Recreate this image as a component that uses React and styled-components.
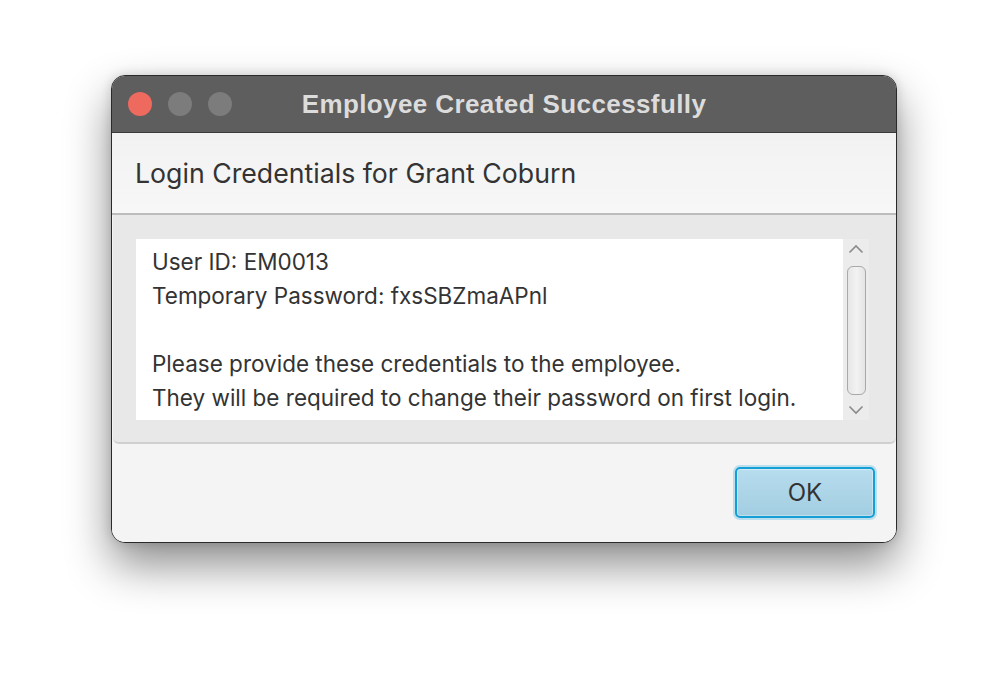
import React from "react";
import styled, { createGlobalStyle } from "styled-components";

const Global = createGlobalStyle`
  html, body { margin: 0; padding: 0; background: #ffffff; }
  body { font-family: "Inter", "Noto Sans", sans-serif; }
`;

const Stage = styled.div`
  width: 1008px;
  height: 690px;
  box-sizing: border-box;
  padding: 75px 0 0 111px;
  background: #ffffff;
`;

const Window = styled.div`
  width: 786px;
  height: 468px;
  box-sizing: border-box;
  border: 1px solid #2a2a2a;
  border-radius: 14px;
  overflow: hidden;
  display: flex;
  flex-direction: column;
  background: #f4f4f4;
  box-shadow: 0 22px 45px rgba(0, 0, 0, 0.45), 0 0 12px rgba(0, 0, 0, 0.15);
`;

const TitleBar = styled.div`
  height: 56px;
  flex: none;
  background: #5e5e5e;
  border-bottom: 1px solid #3a3a3a;
  display: flex;
  align-items: center;
  position: relative;
  padding-left: 16px;
`;

const Lights = styled.div`
  display: flex;
  gap: 16px;
  position: relative;
  z-index: 1;
`;

const Light = styled.span`
  width: 24px;
  height: 24px;
  border-radius: 50%;
  background: ${(p) => p.$color};
`;

const Title = styled.div`
  position: absolute;
  left: 0;
  right: 0;
  top: 0;
  bottom: 0;
  display: flex;
  align-items: center;
  justify-content: center;
  font-family: "Liberation Sans", Arial, sans-serif;
  font-weight: 700;
  font-size: 26px;
  letter-spacing: 0.4px;
  color: #dcdcdc;
`;

const Header = styled.div`
  height: 82px;
  flex: none;
  box-sizing: border-box;
  padding-left: 23px;
  display: flex;
  align-items: center;
  background: linear-gradient(#f2f2f2, #f7f7f7);
  border-bottom: 2px solid #bcbcbc;
  font-size: 26.7px;
  color: #333333;
`;

const Pane = styled.div`
  height: 229px;
  flex: none;
  box-sizing: border-box;
  margin: 0 0 0 1px;
  background: #e8e8e8;
  border-radius: 0 0 6px 6px;
  border-bottom: 2px solid #cfcfcf;
  padding: 24px 27px 22px 23px;
  display: flex;
`;

const TextArea = styled.div`
  flex: 1;
  background: #ffffff;
  box-sizing: border-box;
  padding: 6px 16px 0 16px;
  font-size: 22.5px;
  line-height: 34px;
  color: #333333;
  white-space: pre;
  overflow: hidden;
`;

const ScrollBar = styled.div`
  width: 26px;
  flex: none;
  background: #ececec;
  display: flex;
  flex-direction: column;
  align-items: center;
  justify-content: space-between;
  padding: 5px 0;
  box-sizing: border-box;
`;

const Thumb = styled.div`
  width: 19px;
  flex: 1;
  margin: 12px 0 10px;
  box-sizing: border-box;
  border: 1px solid #a9a9a9;
  border-radius: 6px;
  background: linear-gradient(90deg, #e6e6e6, #f2f2f2 50%, #e4e4e4);
`;

const Footer = styled.div`
  flex: 1;
  display: flex;
  justify-content: flex-end;
  align-items: flex-start;
  padding: 23px 21px 0 0;
  background: #f4f4f4;
`;

const OkButton = styled.button`
  width: 140px;
  height: 51px;
  box-sizing: border-box;
  border: 2px solid #14a0d6;
  border-radius: 5px;
  background: linear-gradient(#b7ddee, #a2cde1);
  box-shadow: 0 0 0 2px rgba(20, 160, 214, 0.25), inset 0 0 0 1px rgba(255, 255, 255, 0.35);
  font-family: "Inter", "Noto Sans", sans-serif;
  font-size: 24px;
  color: #333333;
  display: flex;
  align-items: center;
  justify-content: center;
  padding: 0;
`;

const Chevron = ({ up }) => (
  <svg width="16" height="10" viewBox="0 0 16 10">
    <path
      d={up ? "M1.5 8.5 L8 2 L14.5 8.5" : "M1.5 1.5 L8 8 L14.5 1.5"}
      fill="none"
      stroke="#8a8a8a"
      strokeWidth="1.6"
    />
  </svg>
);

export default function App() {
  const text =
    "User ID: EM0013\nTemporary Password: fxsSBZmaAPnl\n\nPlease provide these credentials to the employee.\nThey will be required to change their password on first login.";
  return (
    <>
      <Global />
      <Stage>
        <Window>
          <TitleBar>
            <Lights>
              <Light $color="#ee695e" />
              <Light $color="#7c7c7c" />
              <Light $color="#7c7c7c" />
            </Lights>
            <Title>Employee Created Successfully</Title>
          </TitleBar>
          <Header>Login Credentials for Grant Coburn</Header>
          <Pane>
            <TextArea>{text}</TextArea>
            <ScrollBar>
              <Chevron up />
              <Thumb />
              <Chevron />
            </ScrollBar>
          </Pane>
          <Footer>
            <OkButton>OK</OkButton>
          </Footer>
        </Window>
      </Stage>
    </>
  );
}
